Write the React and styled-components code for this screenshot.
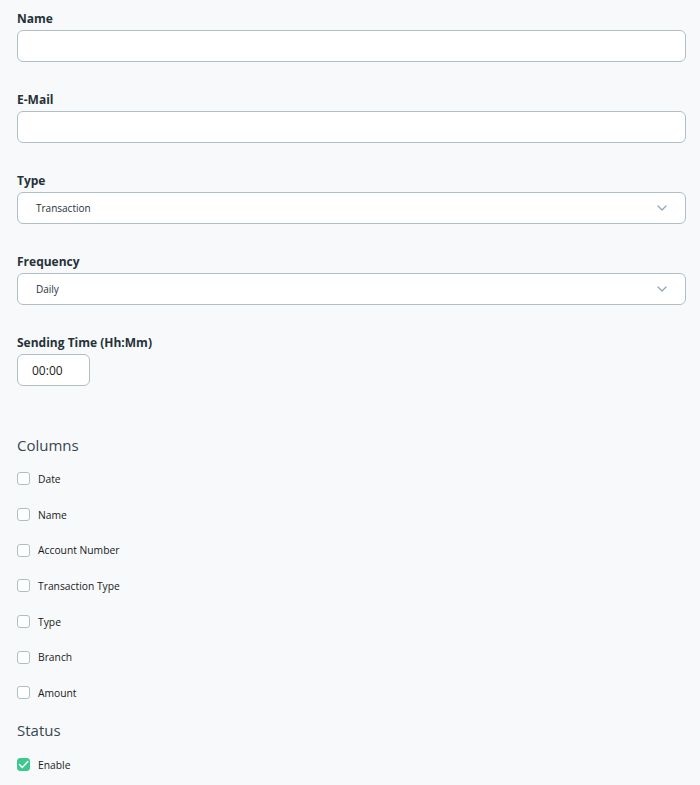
import React from 'react';
import styled, { createGlobalStyle } from 'styled-components';

const GlobalStyle = createGlobalStyle`
  html, body {
    margin: 0;
    padding: 0;
    background: #f7f9fb;
  }
  body {
    font-family: "Open Sans", "Noto Sans", sans-serif;
    color: #263238;
  }
`;

const Form = styled.form`
  padding: 10px 14px 0 17px;
  display: flex;
  flex-direction: column;
`;

const Field = styled.div`
  display: flex;
  flex-direction: column;
  align-items: flex-start;
  margin-bottom: ${(p) => p.$gap || 29}px;
`;

const Label = styled.label`
  font-size: 12px;
  font-weight: 700;
  line-height: 16px;
  color: #263238;
  padding-top: 1px;
  margin-bottom: 3px;
`;

const TextInput = styled.input`
  box-sizing: border-box;
  width: ${(p) => p.$width || '100%'};
  height: 32px;
  border: 1px solid #b0bec5;
  border-radius: 6px;
  background: #fff;
  padding: 0 14px;
  font-family: inherit;
  font-size: 12px;
  color: #212121;
  outline: none;
`;

const SelectBox = styled.div`
  box-sizing: border-box;
  width: 100%;
  height: 32px;
  border: 1px solid #b0bec5;
  border-radius: 6px;
  background: #fff;
  display: flex;
  align-items: center;
  justify-content: space-between;
  padding: 0 18px 0 18px;
  font-size: 10px;
  font-weight: 500;
  color: #263238;
`;

const Chevron = () => (
  <svg width="10" height="6" viewBox="0 0 10 6" fill="none">
    <path d="M1 1l4 4 4-4" stroke="#90a4ae" strokeWidth="1.2" strokeLinecap="round" strokeLinejoin="round" />
  </svg>
);

const Heading = styled.h3`
  margin: 0 0 ${(p) => p.$after || 6}px;
  font-size: 15px;
  font-weight: 500;
  line-height: 20px;
  color: #37474f;
`;

const CheckRow = styled.label`
  display: flex;
  align-items: center;
  gap: 8px;
  height: 35.7px;
  font-size: 10.3px;
  color: #1a1a1a;
`;

const Box = styled.span`
  box-sizing: border-box;
  width: 13px;
  height: 13px;
  border-radius: 3px;
  border: 1px solid ${(p) => (p.$checked ? '#3dc98d' : '#b0bec5')};
  background: ${(p) => (p.$checked ? '#3dc98d' : '#fff')};
  display: flex;
  align-items: center;
  justify-content: center;
`;

const Check = ({ label, checked }) => (
  <CheckRow>
    <Box $checked={checked}>
      {checked && (
        <svg width="11" height="9" viewBox="0 0 11 9" fill="none">
          <path d="M1.5 4.5l2.8 3L9.8 1.5" stroke="#fff" strokeWidth="1.4" strokeLinecap="round" strokeLinejoin="round" />
        </svg>
      )}
    </Box>
    {label}
  </CheckRow>
);

const columns = ['Date', 'Name', 'Account Number', 'Transaction Type', 'Type', 'Branch', 'Amount'];

export default function App() {
  return (
    <>
      <GlobalStyle />
      <Form>
        <Field>
          <Label>Name</Label>
          <TextInput type="text" />
        </Field>
        <Field>
          <Label>E-Mail</Label>
          <TextInput type="text" />
        </Field>
        <Field>
          <Label>Type</Label>
          <SelectBox>
            Transaction
            <Chevron />
          </SelectBox>
        </Field>
        <Field>
          <Label>Frequency</Label>
          <SelectBox>
            Daily
            <Chevron />
          </SelectBox>
        </Field>
        <Field $gap={49}>
          <Label>Sending Time (Hh:Mm)</Label>
          <TextInput type="text" $width="73px" defaultValue="00:00" />
        </Field>

        <Heading $after={6}>Columns</Heading>
        {columns.map((c) => (
          <Check key={c} label={c} />
        ))}
        <Heading $after={7} style={{ marginTop: 9 }}>Status</Heading>
        <Check label="Enable" checked />
      </Form>
    </>
  );
}
